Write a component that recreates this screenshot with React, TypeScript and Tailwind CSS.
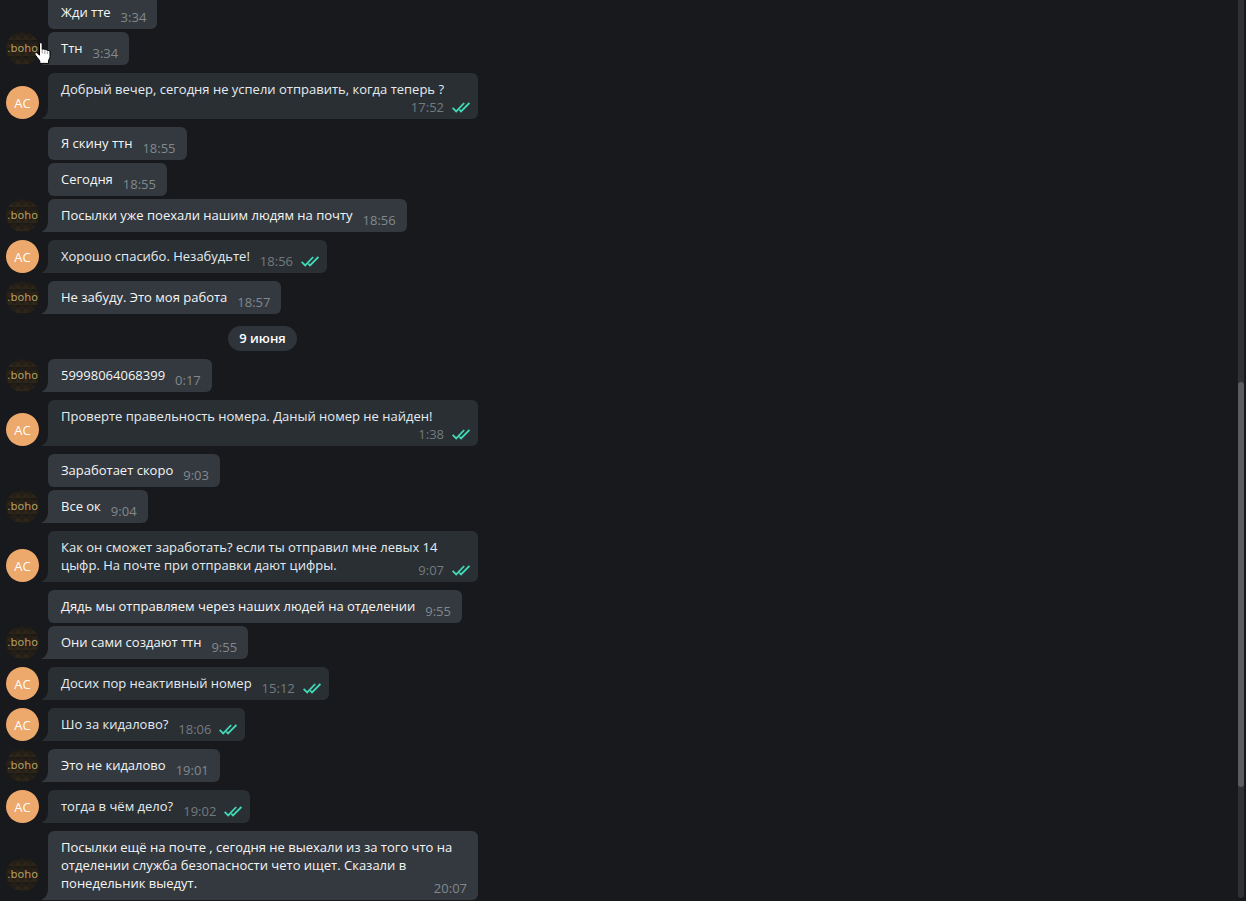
import React from 'react'
import clsx from 'clsx'

type Message = {
  text: string
  time: string
  own?: boolean
  // last message of a group gets the avatar and the tail
  last?: boolean
  layout?: 'inline' | 'below' | 'multiline'
}

type Day = {
  date?: string
  groups: Message[][]
}

const days: Day[] = [
  {
    groups: [
      [
        { text: 'Жди тте', time: '3:34' },
        { text: 'Ттн', time: '3:34' },
      ],
      [{ text: 'Добрый вечер, сегодня не успели отправить, когда теперь ?', time: '17:52', own: true, layout: 'below' }],
      [
        { text: 'Я скину ттн', time: '18:55' },
        { text: 'Сегодня', time: '18:55' },
        { text: 'Посылки уже поехали нашим людям на почту', time: '18:56' },
      ],
      [{ text: 'Хорошо спасибо. Незабудьте!', time: '18:56', own: true }],
      [{ text: 'Не забуду. Это моя работа', time: '18:57' }],
    ],
  },
  {
    date: '9 июня',
    groups: [
      [{ text: '59998064068399', time: '0:17' }],
      [{ text: 'Проверте правельность номера. Даный номер не найден!', time: '1:38', own: true, layout: 'below' }],
      [
        { text: 'Заработает скоро', time: '9:03' },
        { text: 'Все ок', time: '9:04' },
      ],
      [
        {
          text: 'Как он сможет заработать? если ты отправил мне левых 14 цыфр. На почте при отправки дают цифры.',
          time: '9:07',
          own: true,
          layout: 'multiline',
        },
      ],
      [
        { text: 'Дядь мы отправляем через наших людей на отделении', time: '9:55' },
        { text: 'Они сами создают ттн', time: '9:55' },
      ],
      [{ text: 'Досих пор неактивный номер', time: '15:12', own: true }],
      [{ text: 'Шо за кидалово?', time: '18:06', own: true }],
      [{ text: 'Это не кидалово', time: '19:01' }],
      [{ text: 'тогда в чём дело?', time: '19:02', own: true }],
      [
        {
          text: 'Посылки ещё на почте , сегодня не выехали из за того что на отделении служба безопасности чето ищет. Сказали в понедельник выедут.',
          time: '20:07',
          layout: 'multiline',
        },
      ],
    ],
  },
]

const Checks = () => (
  <svg className="h-[11px] w-[18px]" viewBox="0 0 18 11" fill="none" stroke="#41d9b6" strokeWidth="1.8" aria-label="Прочитано">
    <path d="M0.6 5.800 4.200 9.400 12.200 1" />
    <path d="M7.300 7.700 9 9.400 17.400 1" />
  </svg>
)

const Tail = ({ own }: { own?: boolean }) => (
  <svg
    className={clsx('absolute bottom-0 -left-1.5 h-3 w-1.5', own ? 'fill-[#2a2f33]' : 'fill-[#33393f]')}
    viewBox="0 0 6 12"
  >
    <path d="M6 0v12H0v-.6C4 9.500 6 6 6 0Z" />
  </svg>
)

const Avatar = ({ own }: { own?: boolean }) => {
  if (own) {
    return (
      <div className="flex size-[33px] items-center justify-center rounded-full bg-[#eda86c] pt-0.5 text-[13px] leading-none font-medium text-white">
        АС
      </div>
    )
  }
  return (
    <div className="relative flex size-[33px] items-center justify-center">
      <svg className="absolute inset-0 size-full" viewBox="0 0 33 33">
        <defs>
          <pattern id="studs" width="8" height="8" patternUnits="userSpaceOnUse">
            <rect width="8" height="8" fill="#231e17" />
            <path d="M0 8 4 3l4 5Z" fill="#2c2518" />
            <path d="M0 0h8L4 3Z" fill="#1d1a16" />
          </pattern>
        </defs>
        <circle cx="16.500" cy="16.500" r="16.500" fill="url(#studs)" />
      </svg>
      <span className="relative font-['DejaVu_Sans',sans-serif] text-[11px] leading-none text-[#b59c60]">.boho</span>
    </div>
  )
}

const Bubble = ({ text, time, own, last, layout = 'inline' }: Message) => {
  const inline = layout === 'inline'
  const meta = (
    <span
      className={clsx(
        'flex items-center gap-2',
        own ? 'text-[#737b80]' : 'text-[#82888d]',
        !inline && 'float-right',
        layout === 'multiline' && 'mt-[5px]'
      )}
    >
      <time>{time}</time>
      {own && <Checks />}
    </span>
  )
  return (
    <div
      className={clsx(
        'relative rounded-md pt-[7px] pb-[3px] pl-[13px] text-[13px] leading-[18px]',
        own ? 'bg-[#2a2f33] pr-2 text-[#e4ecf2]' : 'bg-[#33393f] pr-[11px] text-[#f5f5f5]',
        last && 'rounded-bl-none',
        inline ? 'flex items-end gap-2.5' : 'flow-root w-[430px] max-w-full'
      )}
    >
      {last && <Tail own={own} />}
      {inline ? <p className="mb-[5px]">{text}</p> : text}
      {meta}
    </div>
  )
}

const Cursor = () => (
  <svg className="pointer-events-none absolute bottom-px left-[28px] z-10 h-[22px] w-[17px]" viewBox="0 0 17 22">
    <path
      d="M5.500 1.700c0-1.400 2.700-1.400 2.700 0V7.400c.7-.7 2.500-.5 2.700.5.700-.6 2.300-.3 2.500.7.800-.4 2.600 0 2.600 1.400V14.500c0 2-1.500 3-1.500 4.700V21.400H5.800v-2.200C4.800 17 2 14.500.9 12.200c-.5-1.400 1.400-2.200 2.600-1l2 2Z"
      fill="#fff"
      stroke="#000"
    />
    <path d="M8.200 8v3.500M10.900 8.500V12M13.400 9.500V12" stroke="#555" strokeWidth=".6" />
  </svg>
)

const Group = ({ messages, hovered }: { messages: Message[]; hovered?: boolean }) => {
  const own = messages[0].own
  return (
    <section className="relative flex items-end gap-[9px]">
      <div className="sticky bottom-[9px] shrink-0">
        <Avatar own={own} />
      </div>
      <div className="flex min-w-0 flex-col items-start gap-[3px]">
        {messages.map((message, i) => (
          <Bubble key={i} {...message} last={i === messages.length - 1} />
        ))}
      </div>
      {hovered && <Cursor />}
    </section>
  )
}

const Scrollbar = () => (
  <div className="mr-0.5 mb-[3px] flex w-1.5 shrink-0 flex-col rounded-b-full bg-[#2f3133]">
    <div className="grow-[382]" />
    <div className="grow-[405] rounded-full bg-[#5b5c5e]" />
    <div className="grow-[111]" />
  </div>
)

const App = () => {
  return (
    <div className="flex h-screen overflow-hidden bg-[#18191d] font-['Open_Sans',sans-serif]">
      <main className="flex min-w-0 flex-1 flex-col justify-end overflow-hidden pb-px pl-1.5">
        {days.map((day, i) => (
          <div key={i} className="flex shrink-0 flex-col gap-2">
            {day.date && (
              <div className="mt-3 flex w-full max-w-[513px] justify-center">
                <h2 className="rounded-full bg-[#2e343a] px-[11px] text-[13px] leading-[25px] font-semibold text-white">
                  {day.date}
                </h2>
              </div>
            )}
            {day.groups.map((messages, j) => (
              <Group key={j} messages={messages} hovered={i === 0 && j === 0} />
            ))}
          </div>
        ))}
      </main>
      <Scrollbar />
    </div>
  )
}

export default App
